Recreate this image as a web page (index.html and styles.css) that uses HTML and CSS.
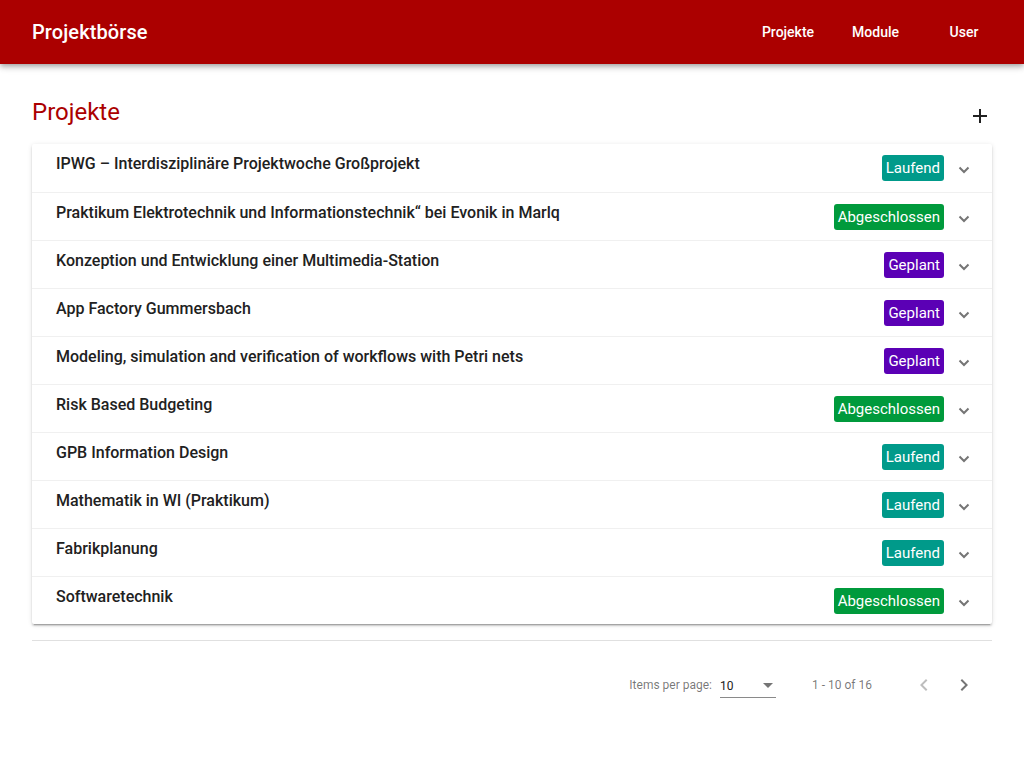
FILE: index.html
```html
<!DOCTYPE html>
<html lang="de">
<head>
<meta charset="utf-8">
<title>Projektbörse</title>
<link rel="stylesheet" href="styles.css">
</head>
<body>
<header class="toolbar">
  <span class="brand">Projektbörse</span>
  <nav class="nav">
    <a class="nav-btn nav-projekte">Projekte</a>
    <a class="nav-btn nav-module">Module</a>
    <a class="nav-btn nav-user">User</a>
  </nav>
</header>
<main class="content">
  <div class="page-head">
    <h1 class="page-title">Projekte</h1>
    <svg class="add-icon" width="24" height="24" viewBox="0 0 24 24"><path d="M19 13h-6v6h-2v-6H5v-2h6V5h2v6h6v2z" fill="#212121"/></svg>
  </div>
  <div class="card">
    <div class="row"><span class="row-title">IPWG – Interdisziplinäre Projektwoche Großprojekt</span><span class="badge laufend">Laufend</span><svg class="chev" width="12" height="8" viewBox="0 0 12 8"><path d="M1.5 1.5 6 6l4.5-4.5" fill="none" stroke="#757575" stroke-width="2"/></svg></div>
    <div class="row"><span class="row-title">Praktikum Elektrotechnik und Informationstechnik“ bei Evonik in Marlq</span><span class="badge abgeschlossen">Abgeschlossen</span><svg class="chev" width="12" height="8" viewBox="0 0 12 8"><path d="M1.5 1.5 6 6l4.5-4.5" fill="none" stroke="#757575" stroke-width="2"/></svg></div>
    <div class="row"><span class="row-title">Konzeption und Entwicklung einer Multimedia-Station</span><span class="badge geplant">Geplant</span><svg class="chev" width="12" height="8" viewBox="0 0 12 8"><path d="M1.5 1.5 6 6l4.5-4.5" fill="none" stroke="#757575" stroke-width="2"/></svg></div>
    <div class="row"><span class="row-title">App Factory Gummersbach</span><span class="badge geplant">Geplant</span><svg class="chev" width="12" height="8" viewBox="0 0 12 8"><path d="M1.5 1.5 6 6l4.5-4.5" fill="none" stroke="#757575" stroke-width="2"/></svg></div>
    <div class="row"><span class="row-title">Modeling, simulation and verification of workflows with Petri nets</span><span class="badge geplant">Geplant</span><svg class="chev" width="12" height="8" viewBox="0 0 12 8"><path d="M1.5 1.5 6 6l4.5-4.5" fill="none" stroke="#757575" stroke-width="2"/></svg></div>
    <div class="row"><span class="row-title">Risk Based Budgeting</span><span class="badge abgeschlossen">Abgeschlossen</span><svg class="chev" width="12" height="8" viewBox="0 0 12 8"><path d="M1.5 1.5 6 6l4.5-4.5" fill="none" stroke="#757575" stroke-width="2"/></svg></div>
    <div class="row"><span class="row-title">GPB Information Design</span><span class="badge laufend">Laufend</span><svg class="chev" width="12" height="8" viewBox="0 0 12 8"><path d="M1.5 1.5 6 6l4.5-4.5" fill="none" stroke="#757575" stroke-width="2"/></svg></div>
    <div class="row"><span class="row-title">Mathematik in WI (Praktikum)</span><span class="badge laufend">Laufend</span><svg class="chev" width="12" height="8" viewBox="0 0 12 8"><path d="M1.5 1.5 6 6l4.5-4.5" fill="none" stroke="#757575" stroke-width="2"/></svg></div>
    <div class="row"><span class="row-title">Fabrikplanung</span><span class="badge laufend">Laufend</span><svg class="chev" width="12" height="8" viewBox="0 0 12 8"><path d="M1.5 1.5 6 6l4.5-4.5" fill="none" stroke="#757575" stroke-width="2"/></svg></div>
    <div class="row"><span class="row-title">Softwaretechnik</span><span class="badge abgeschlossen">Abgeschlossen</span><svg class="chev" width="12" height="8" viewBox="0 0 12 8"><path d="M1.5 1.5 6 6l4.5-4.5" fill="none" stroke="#757575" stroke-width="2"/></svg></div>
  </div>
  <div class="divider"></div>
  <div class="paginator">
    <span class="pg-label">Items per page:</span>
    <div class="pg-select"><span class="pg-value">10</span><svg width="10" height="5" viewBox="0 0 10 5"><path d="M0 0h10L5 5z" fill="#757575"/></svg></div>
    <span class="pg-range">1 - 10 of 16</span>
    <span class="pg-btn"><svg width="24" height="24" viewBox="0 0 24 24"><path d="M15.41 7.41 14 6l-6 6 6 6 1.41-1.41L10.83 12z" fill="#bdbdbd"/></svg></span>
    <span class="pg-btn"><svg width="24" height="24" viewBox="0 0 24 24"><path d="M10 6 8.59 7.41 13.17 12l-4.58 4.59L10 18l6-6z" fill="#757575"/></svg></span>
  </div>
</main>
</body>
</html>
```
FILE: styles.css
```css
* { box-sizing: border-box; }
body {
  margin: 0;
  font-family: Roboto, "Helvetica Neue", sans-serif;
  background: #fff;
  color: #212121;
}
.toolbar {
  height: 64px;
  background: #ab0000;
  color: #fff;
  display: flex;
  align-items: center;
  padding: 0 16px 0 32px;
  box-shadow: 0 2px 4px -1px rgba(0,0,0,.2), 0 4px 5px 0 rgba(0,0,0,.14), 0 1px 10px 0 rgba(0,0,0,.12);
  position: relative;
  z-index: 2;
}
.brand {
  font-size: 20px;
  font-weight: 500;
  letter-spacing: .1px;
}
.nav {
  margin-left: auto;
  display: flex;
  align-items: center;
}
.nav-btn {
  font-size: 14px;
  font-weight: 500;
  line-height: 36px;
  padding: 0 16px;
  min-width: 64px;
  text-align: center;
  color: #fff;
}
.nav-module { margin-left: 6px; }
.nav-user { margin-left: 17px; margin-right: 12px; }
.content {
  padding: 32px 32px 0;
}
.page-head {
  display: flex;
  justify-content: space-between;
  align-items: flex-start;
  height: 48px;
}
.page-title {
  margin: 0;
  font-size: 24px;
  font-weight: 400;
  line-height: 32px;
  color: #ab0000;
}
.add-icon { margin-top: 8px; }
.card {
  background: #fff;
  border-radius: 2px;
  box-shadow: 0 3px 1px -2px rgba(0,0,0,.2), 0 2px 2px 0 rgba(0,0,0,.14), 0 1px 5px 0 rgba(0,0,0,.12);
}
.row {
  height: 48px;
  display: flex;
  align-items: center;
  padding: 0 22px 0 24px;
  border-top: 1px solid #f0f0f0;
}
.row:first-child { border-top: none; }
.row-title {
  align-self: flex-start;
  padding-top: 10px;
  font-size: 16px;
  font-weight: 500;
  line-height: 20px;
  color: #212121;
  flex: 1;
}
.badge {
  color: #fff;
  font-size: 15px;
  line-height: 26px;
  padding: 0 4px;
  border-radius: 3px;
}
.laufend { background: #009a8a; }
.abgeschlossen { background: #009a3c; }
.geplant { background: #5b00b5; }
.chev {
  margin-left: 14px;
  margin-top: 4px;
}
.divider {
  margin-top: 16px;
  border-top: 1px solid #e0e0e0;
}
.paginator {
  margin-top: 16px;
  height: 56px;
  display: flex;
  align-items: center;
  justify-content: flex-end;
  padding-right: 8px;
  font-size: 12px;
  color: rgba(0,0,0,.54);
}
.pg-label { margin-right: 8px; }
.pg-select {
  width: 56px;
  height: 24px;
  display: flex;
  align-items: center;
  justify-content: space-between;
  border-bottom: 1px solid #8a8a8a;
  padding-right: 3px;
  margin-top: 2px;
  margin-right: 36px;
}
.pg-value { color: #212121; }
.pg-range { margin-right: 32px; }
.pg-btn {
  width: 40px;
  height: 40px;
  display: flex;
  align-items: center;
  justify-content: center;
}
```
